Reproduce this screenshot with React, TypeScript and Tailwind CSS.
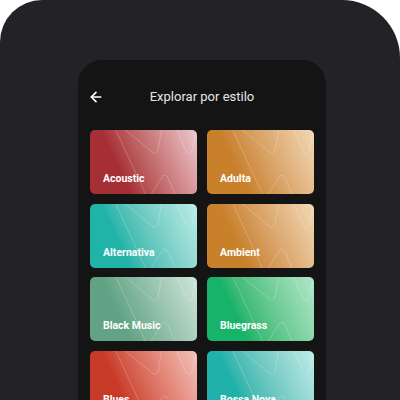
import { ArrowLeft } from "lucide-react";

const styles = [
  { name: "Acoustic", from: "from-[#a62f36]", to: "to-[#ebc9cf]" },
  { name: "Adulta", from: "from-[#c8802a]", to: "to-[#f2d9b6]" },
  { name: "Alternativa", from: "from-[#20b4a9]", to: "to-[#bcede8]" },
  { name: "Ambient", from: "from-[#c8802a]", to: "to-[#f2d9b6]" },
  { name: "Black Music", from: "from-[#62a385]", to: "to-[#cfe6db]" },
  { name: "Bluegrass", from: "from-[#16b369]", to: "to-[#b0e8cb]" },
  { name: "Blues", from: "from-[#c83a28]", to: "to-[#f3c1ba]" },
  { name: "Bossa Nova", from: "from-[#20b2aa]", to: "to-[#bfebe8]" },
];

function Waves() {
  return (
    <svg
      className="absolute inset-0"
      width="108"
      height="64"
      viewBox="0 0 108 64"
      fill="none"
      stroke="white"
      strokeOpacity="0.28"
      strokeWidth="0.8"
    >
      <path d="M25 -2 L55 63 Q58 69 62 63 L72 47 Q75 43 78 48 L86 66" />
      <path d="M33 -2 L61 21 Q65 26 68 20 L72 -2" />
      <path d="M86 -2 L96 21 Q99 26 102 21 L107 -2" />
    </svg>
  );
}

export default function App() {
  return (
    <div className="w-[400px] h-[400px] bg-white overflow-hidden" style={{ fontFamily: "Roboto, 'Noto Sans', sans-serif" }}>
      <div className="w-[400px] h-[400px] bg-[#232227] rounded-tl-[42px] rounded-tr-[58px] pt-[60px] pl-[78px] overflow-hidden">
        <div className="w-[248px] h-[380px] bg-[#141414] rounded-t-[24px]">

          {/* HEADER */}
          <div className="h-[70px] pt-[3px] px-[10px] flex items-center">
            <div className="w-4 h-4 flex items-center justify-center text-white">
              <ArrowLeft size={16} strokeWidth={2.5} />
            </div>
            <div className="flex-1 text-center text-[13px] text-[#e6e6e6]">
              Explorar por estilo
            </div>
            <div className="w-4 h-4" />
          </div>

          {/* GRID */}
          <div className="grid grid-cols-2 gap-x-[10px] gap-y-[9.5px] px-3">
            {styles.map((s) => (
              <div
                key={s.name}
                className={`relative h-[64px] rounded-[5px] overflow-hidden bg-linear-65 from-30% ${s.from} ${s.to}`}
              >
                <Waves />
                <div className="absolute left-[13px] bottom-[7px] text-[10.5px] font-bold text-white">
                  {s.name}
                </div>
              </div>
            ))}
          </div>

        </div>
      </div>
    </div>
  );
}
